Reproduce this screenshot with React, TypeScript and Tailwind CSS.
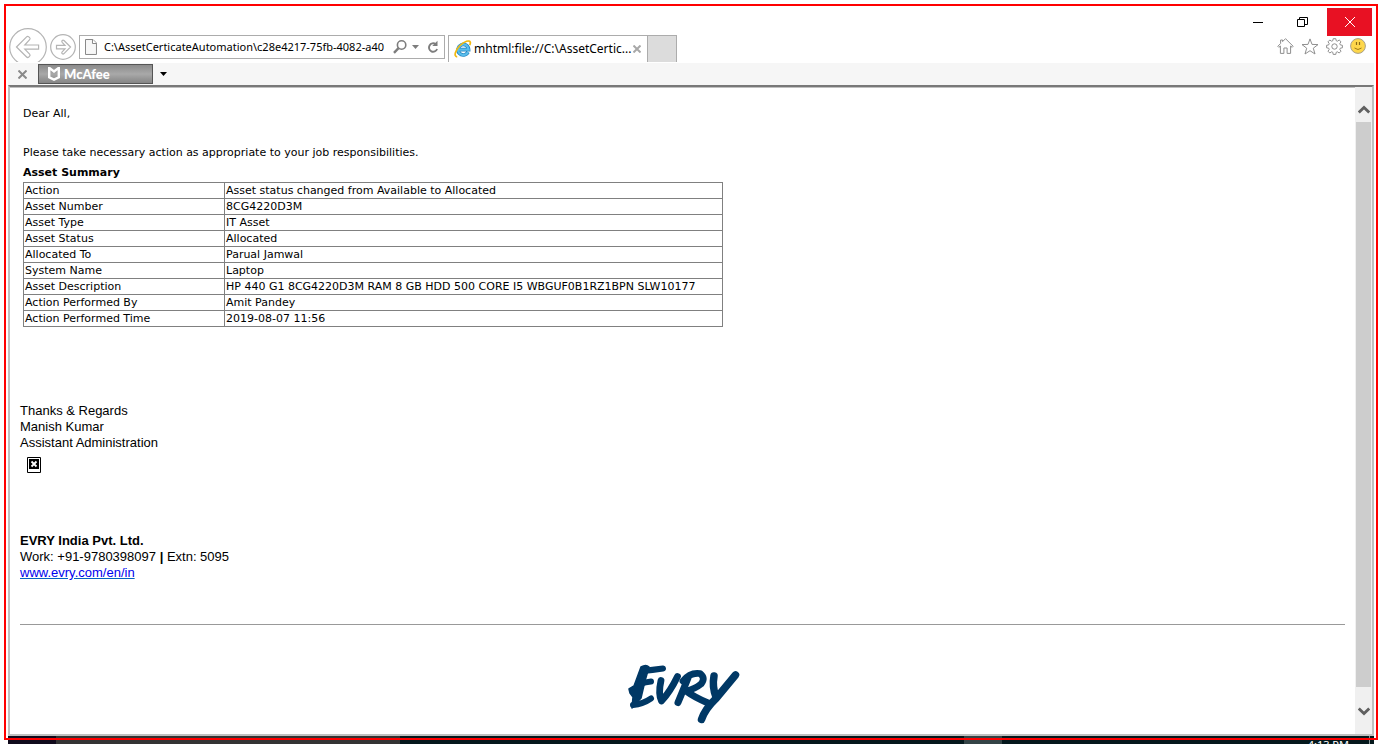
import React from "react";

const rows: [string, string][] = [
  ["Action", "Asset status changed from Available to Allocated"],
  ["Asset Number", "8CG4220D3M"],
  ["Asset Type", "IT Asset"],
  ["Asset Status", "Allocated"],
  ["Allocated To", "Parual Jamwal"],
  ["System Name", "Laptop"],
  ["Asset Description", "HP 440 G1 8CG4220D3M RAM 8 GB HDD 500 CORE I5 WBGUF0B1RZ1BPN SLW10177"],
  ["Action Performed By", "Amit Pandey"],
  ["Action Performed Time", "2019-08-07 11:56"],
];

function BackIcon() {
  return (
    <svg width="38" height="38" viewBox="0 0 38 38" fill="none" stroke="#b4b4b4" strokeWidth="1.2">
      <circle cx="19" cy="19" r="18.3" />
      <path d="M7.5 19 17.6 8.9q1-1 2.2 0l.8.8q1 1 0 2L15.8 17H29.6v4.2H15.8l4.8 5q1 1 0 2l-.8.8q-1.2 1-2.2 0Z" />
    </svg>
  );
}

function ForwardIcon() {
  return (
    <svg width="26" height="26" viewBox="0 0 26 26" fill="none" stroke="#b4b4b4" strokeWidth="1.2">
      <circle cx="13" cy="13" r="12.3" />
      <path d="M20.5 13 14 6.5q-1-.8-1.8 0t0 1.8L15 11.4H6.5v3.4H15l-2.8 3q-.9 1 0 1.8t1.8 0Z" />
    </svg>
  );
}

function PageIcon() {
  return (
    <svg width="12" height="16" viewBox="0 0 12 16" fill="#f7f7f7" stroke="#888">
      <path d="M.5.5h7.500l3.500 3.500v11.500H.5Z" />
      <path d="M7.500.5v4h4" fill="#fff" />
    </svg>
  );
}

function SearchIcon() {
  return (
    <svg width="14" height="14" viewBox="0 0 14 14" fill="none" stroke="#7d7d7d">
      <circle cx="8.6" cy="5" r="4.2" strokeWidth="1.6" />
      <path d="M5.500 8.200 1 12.800" strokeWidth="2.4" />
    </svg>
  );
}

function RefreshIcon() {
  return (
    <svg width="12" height="14" viewBox="0 0 12 14" fill="none" stroke="#7d7d7d" strokeWidth="1.9">
      <path d="M8.600 4.100A4.200 4.200 0 1 0 10.100 9" />
      <path d="M10.500.8V6H5.300Z" fill="#7d7d7d" stroke="none" />
    </svg>
  );
}

function ExplorerIcon() {
  return (
    <svg width="18" height="18" viewBox="0 0 18 18" fill="none">
      <path d="M14 12.200A5.300 5.300 0 1 1 14.600 9.600H4.600" stroke="#2583bd" strokeWidth="3.6" />
      <path d="M14 12.200A5.300 5.300 0 1 1 14.600 9.600H4.600" stroke="#58bdec" strokeWidth="2.3" />
      <path d="M3.200 16.800C-.8 16.500 1.500 10 6 5.500S15.600-.2 16.300 2.200c.3 1-.1 2-.6 3" stroke="#f2b90f" strokeWidth="1.7" />
    </svg>
  );
}

function HomeIcon() {
  return (
    <svg width="17" height="16" viewBox="0 0 17 16" fill="none" stroke="#8f8f8f">
      <path d="M8.500.7 16.200 8.300l-1 1L13.600 8v7.400h-3.500V10H6.900v5.400H3.400V8L1.800 9.300l-1-1L3.600 5.500V2h2v1.600Z" />
    </svg>
  );
}

function StarIcon() {
  return (
    <svg width="18" height="17" viewBox="0 0 18 17" fill="none" stroke="#8f8f8f">
      <path d="m9 .9 2 5.500 6 .2-4.700 3.600 1.700 5.800L9 12.700 4 16l1.700-5.800L1 6.600l6-.2Z" />
    </svg>
  );
}

function GearIcon() {
  return (
    <svg width="17" height="17" viewBox="0 0 17 17" fill="none" stroke="#8f8f8f">
      <path d="M7.200.7h2.600l.4 2 1.200.5 1.800-1.200L15 3.800l-1.200 1.800.5 1.300 2.100.4v2.500l-2.100.4-.5 1.200L15 13.200 13.200 15l-1.800-1.200-1.200.5-.4 2.100H7.200l-.4-2.100-1.200-.5L3.800 15 2 13.200l1.200-1.800-.5-1.200-2.100-.4V7.300l2.100-.4.5-1.300L2 3.800 3.800 2l1.800 1.200 1.200-.5Z" />
      <circle cx="8.5" cy="8.5" r="2.7" />
    </svg>
  );
}

function SmileIcon() {
  return (
    <svg width="16" height="16" viewBox="0 0 16 16">
      <circle cx="8" cy="8" r="7.4" fill="#fed74b" stroke="#a8a08a" />
      <path d="M6.500 4v3M9.500 4v3" stroke="#8a6914" strokeWidth="1.2" />
      <path d="M4.500 10q3.500 3 7 0" fill="none" stroke="#a07a14" />
    </svg>
  );
}

function EvryLogo() {
  return (
    <svg className="overflow-visible" width="110" height="60" viewBox="0 0 110 60" fill="none" stroke="#003865" strokeLinecap="round" strokeLinejoin="round" role="img" aria-label="EVRY">
      <path d="M13 3Q18 0 21 3L17 17 13 34 4 44 5 33 2 29 1 25 6 22Z" fill="#003865" strokeWidth="1.5" />
      <path d="M15 7Q24 6 35 4.500M12 20Q18 18 23 17.500M5 41Q15 40 23 34.500" strokeWidth="6" />
      <path d="M33 16.500Q30 30 33.500 37Q42 28 49.500 12.500" strokeWidth="6.8" />
      <path d="M60 14Q54 29 50 38.500" strokeWidth="7" />
      <path d="M55 17Q62 8 72 9.500Q78 14 73 20Q67 25 58 27Q66 33 80 39" strokeWidth="6.8" />
      <path d="M86 12Q84 23 88 33M107.500 11 88 34.500Q77 45 73.500 55.500" strokeWidth="7.5" />
    </svg>
  );
}

export default function App() {
  return (
    <div className="relative flex h-screen flex-col overflow-hidden bg-white px-2 pt-2 text-black">
      <header className="flex h-[55px] shrink-0 justify-between font-['Noto_Sans',sans-serif] text-xs">
        <div className="flex h-[54px] min-w-0 items-start overflow-hidden pt-5">
          <button aria-label="Back" className="shrink-0 pl-px"><BackIcon /></button>
          <button aria-label="Forward" className="ml-[3px] mt-[6px] shrink-0"><ForwardIcon /></button>
          <div className="ml-[3px] mt-[7px] flex h-6 w-[366px] shrink-0 items-center border border-[#acacac] px-[5px]">
            <PageIcon />
            <input
              aria-label="Address"
              className="ml-[7px] w-[286px] min-w-0 bg-transparent text-[11px] outline-none"
              defaultValue="C:\AssetCerticateAutomation\c28e4217-75fb-4082-a40"
            />
            <button aria-label="Search" className="ml-1"><SearchIcon /></button>
            <button aria-label="Search options" className="ml-[5px]">
              <svg width="7" height="4"><path d="M0 0h7L3.500 4Z" fill="#7d7d7d" /></svg>
            </button>
            <button aria-label="Refresh" className="ml-2"><RefreshIcon /></button>
          </div>
          <div className="ml-[3px] mt-[7px] flex h-[27px] w-[200px] shrink-0 items-center border-x border-t border-[#acacac] pl-[5px] pr-[6px]">
            <ExplorerIcon />
            <span className="ml-[2px] min-w-0 flex-1 whitespace-nowrap">mhtml:file://C:\AssetCertic...</span>
            <button aria-label="Close tab">
              <svg width="8" height="8" viewBox="0 0 8 8" stroke="#a8a8a8" strokeWidth="2"><path d="m.5.5 7 7m0-7-7 7" /></svg>
            </button>
          </div>
          <button aria-label="New tab" className="mt-[7px] h-[27px] w-[29px] shrink-0 border-r border-t border-[#acacac] bg-[#dcdcdc]" />
        </div>
        <div className="flex shrink-0 flex-col items-end">
          <div className="flex h-7 pr-[2px]">
            <button aria-label="Minimize" className="flex w-[45px] items-center justify-center">
              <svg width="10" height="10"><path d="M0 5.500h10" stroke="#000" /></svg>
            </button>
            <button aria-label="Restore" className="flex w-[47px] items-center justify-center pr-[2px]">
              <svg width="11" height="10" fill="none" stroke="#000"><path d="M.5 2.500h7v7h-7ZM2.500 2.500v-2h8v7h-3" /></svg>
            </button>
            <button aria-label="Close" className="flex w-[45px] items-center justify-center bg-[#e81123]">
              <svg width="10" height="10" stroke="#fff"><path d="m0 0 10 10M10 0 0 10" /></svg>
            </button>
          </div>
          <div className="flex h-5 items-center gap-[7px] pr-2">
            <button aria-label="Home"><HomeIcon /></button>
            <button aria-label="Favorites"><StarIcon /></button>
            <button aria-label="Tools"><GearIcon /></button>
            <button aria-label="Feedback"><SmileIcon /></button>
          </div>
        </div>
      </header>

      <div className="flex h-[22px] shrink-0 items-center bg-[#f6f6f6] pl-[10px]">
        <button aria-label="Close toolbar">
          <svg width="9" height="9" viewBox="0 0 9 9" stroke="#8a8a8a" strokeWidth="2"><path d="m.5.5 8 8m0-8-8 8" /></svg>
        </button>
        <button className="ml-[11px] flex h-5 w-[115px] items-center border border-[#555] bg-linear-to-b from-[#8b8b8b] via-[#a9a9a9] to-[#858585] pl-[9px] font-['Lato',sans-serif] text-[13px] font-black leading-4 text-white">
          <svg width="12" height="14" viewBox="0 0 12 14" fill="none" stroke="#fff" strokeWidth="2.4"><path d="M1.200.8v9.400L6 12.600l4.800-2.400V.8L6 4.500Z" /></svg>
          <span className="ml-1">McAfee</span>
        </button>
        <button aria-label="McAfee menu" className="ml-[7px]">
          <svg width="7" height="4"><path d="M0 0h7L3.500 4Z" /></svg>
        </button>
      </div>

      <div className="flex min-h-0 flex-1 border-2 border-[#c0c0c0] border-t-[#787878]">
        <main className="min-w-0 flex-1 overflow-hidden border-t border-[#c0c0c0] px-[10px] pt-[18px]">
          <div className="pl-[3px] font-['DejaVu_Sans',sans-serif] text-[11px] leading-4">
            <p>Dear All,</p>
            <p className="mt-[23px]">Please take necessary action as appropriate to your job responsibilities.</p>
            <h1 className="mt-1 font-bold">Asset Summary</h1>
            <table className="mt-px w-[700px] border-collapse border border-[#222] text-left leading-[14px]">
              <tbody>
                {rows.map(([label, value]) => (
                  <tr key={label} className="h-4">
                    <th scope="row" className="w-[201px] border border-[#808080] px-px pb-0 pt-px font-normal">{label}</th>
                    <td className="whitespace-nowrap border border-[#808080] px-px pb-0 pt-px">{value}</td>
                  </tr>
                ))}
              </tbody>
            </table>
          </div>
          <div className="mt-[76px] font-['Liberation_Sans',Arial,sans-serif] text-[13px] leading-4">
            <p>Thanks &amp; Regards</p>
            <p>Manish Kumar</p>
            <p>Assistant Administration</p>
            <svg className="ml-[7px] mt-[6px]" width="14" height="16" role="img" aria-label="Missing image">
              <path d="M.5.5h13v15H.5Z" fill="#fff" stroke="#000" />
              <path d="M2 2h10v10H2Z" />
              <path d="m4.500 4.500 5 5m0-5-5 5" stroke="#fff" strokeWidth="1.8" />
            </svg>
            <p className="mt-[60px] font-bold">EVRY India Pvt. Ltd.</p>
            <p>Work: +91-9780398097 <b>|</b> Extn: 5095</p>
            <p><a href="http://www.evry.com/en/in" className="text-[#0000ee] underline decoration-[#0563c1]">www.evry.com/en/in</a></p>
          </div>
          <hr className="mt-[43px] border-t border-[#999]" />
          <div className="mt-[39px] flex justify-center"><EvryLogo /></div>
        </main>
        <div className="flex w-[17px] shrink-0 flex-col items-center bg-[#f0f0f0]">
          <button aria-label="Scroll up" className="flex h-[35px] shrink-0 items-center pt-[9px]">
            <svg width="12" height="9" viewBox="0 0 12 9" fill="none" stroke="#606060" strokeWidth="2.8"><path d="m.8 7.500 5.200-5 5.200 5" /></svg>
          </button>
          <div className="w-[15px] flex-1 bg-[#cdcdcd]" />
          <button aria-label="Scroll down" className="flex h-[47px] shrink-0 items-center pt-[2px]">
            <svg width="12" height="9" viewBox="0 0 12 9" fill="none" stroke="#606060" strokeWidth="2.8"><path d="m.8 1.500 5.200 5 5.200-5" /></svg>
          </button>
        </div>
      </div>

      <footer className="flex h-2 shrink-0 overflow-hidden bg-[#04181c] font-['Noto_Sans',sans-serif] text-[11px] text-white">
        <div className="w-12 bg-[#100a1c]" />
        <div className="w-[344px] bg-[#333]" />
        <div className="flex-1" />
        <div className="w-[38px] bg-[#344446]" />
        <div className="flex w-[372px] justify-end">
          <span className="pr-5 leading-[18px]">4:13 PM</span>
          <div className="mr-1 w-px bg-[#8a9496]" />
        </div>
      </footer>
      <div className="pointer-events-none absolute inset-1 border-2 border-[#ff0000]" />
    </div>
  );
}
